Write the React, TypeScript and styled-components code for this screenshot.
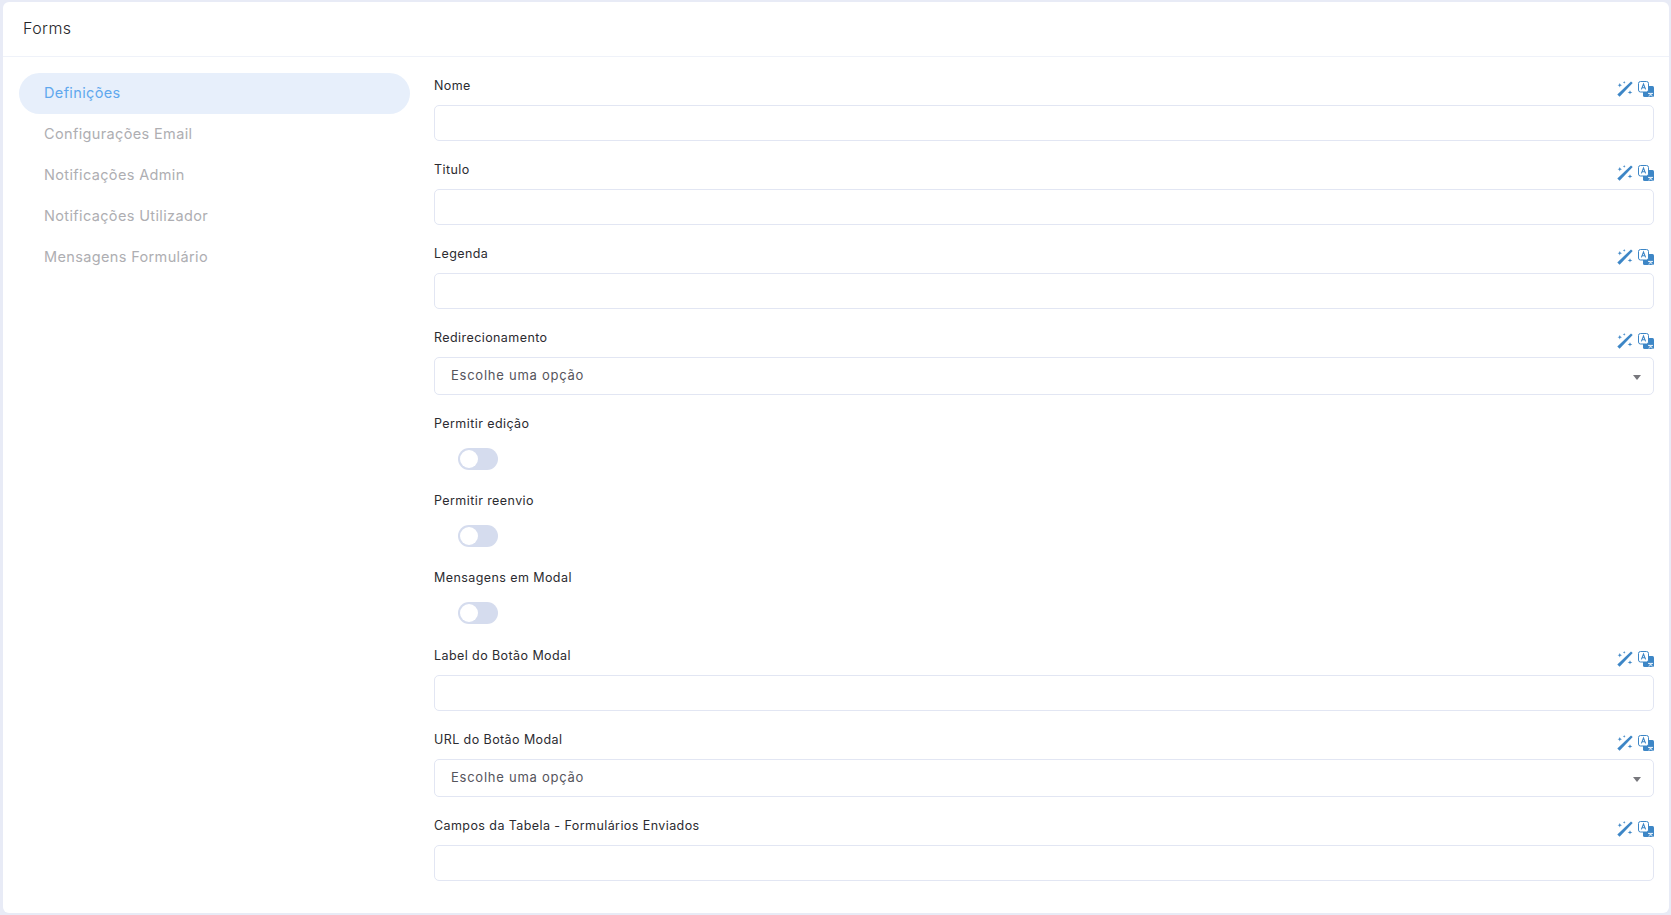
import React from 'react';
import styled, { createGlobalStyle } from 'styled-components';

const GlobalStyle = createGlobalStyle`
  html, body {
    margin: 0;
    padding: 0;
    height: 100%;
    background: #e8ebf6;
    font-family: Inter, "Noto Sans", sans-serif;
  }
  * { box-sizing: border-box; }
`;

const Page = styled.div`
  width: 1671px;
  height: 915px;
  padding: 2px 2px 2px 3px;
  overflow: hidden;
`;

const Card = styled.div`
  height: 911px;
  background: #fff;
  border-radius: 6px;
  display: flex;
  flex-direction: column;
`;

const CardHeader = styled.div`
  height: 55px;
  padding: 0 0 2px 20px;
  display: flex;
  align-items: center;
  border-bottom: 1px solid #eff2f9;
  font-size: 16px;
  font-weight: 300;
  color: #26262a;
  letter-spacing: 0.4px;
`;

const CardBody = styled.div`
  display: flex;
  flex: 1;
`;

const Sidebar = styled.nav`
  width: 431px;
  padding: 16px 24px 0 16px;
  flex-shrink: 0;
`;

const NavItem = styled.div<{ $active?: boolean }>`
  height: 41px;
  padding: 0 0 2px 25px;
  display: flex;
  align-items: center;
  border-radius: 21px;
  font-size: 14.5px;
  letter-spacing: 0.36px;
  color: ${({ $active }) => ($active ? '#5fa8ee' : '#aeaeb2')};
  background: ${({ $active }) => ($active ? '#e7effb' : 'transparent')};
`;

const Form = styled.div`
  flex: 1;
  padding: 16px 15px 0 0;
  min-width: 0;
`;

const Field = styled.div<{ $height: number }>`
  height: ${({ $height }) => $height}px;
`;

const LabelRow = styled.div`
  height: 32px;
  display: flex;
  align-items: flex-start;
  justify-content: space-between;
`;

const Label = styled.label`
  font-size: 12.5px;
  line-height: 25px;
  letter-spacing: 0.42px;
  color: #2b2b30;
`;

const Tools = styled.div`
  display: flex;
  gap: 5px;
  padding-top: 8px;
`;

const TextInput = styled.div`
  height: 36px;
  border: 1px solid #e2e6f3;
  border-radius: 5px;
  background: #fff;
`;

const SelectBox = styled.div`
  height: 38px;
  padding: 0 12px 3px 16px;
  border: 1px solid #e2e6f3;
  border-radius: 5px;
  display: flex;
  align-items: center;
  justify-content: space-between;
  font-size: 13px;
  letter-spacing: 0.75px;
  color: #55555c;
`;

const Caret = styled.span`
  width: 0;
  height: 0;
  margin-top: 5px;
  border-left: 4px solid transparent;
  border-right: 4px solid transparent;
  border-top: 5px solid #77777c;
`;

const SwitchTrack = styled.div`
  width: 40px;
  height: 22px;
  margin: 5px 0 0 24px;
  padding: 2px;
  border-radius: 11px;
  background: #d5dcee;
`;

const SwitchKnob = styled.div`
  width: 18px;
  height: 18px;
  border-radius: 50%;
  background: #fff;
`;

const WandIcon = () => (
  <svg width="16" height="16" viewBox="0 0 16 16" fill="#3d86c6">
    <path d="M14 0.4 15.7 2.1 2.6 15.7 0.3 13.4Z" />
    <path d="M2.8 2 3.4 3.6 5 4.2 3.4 4.8 2.8 6.4 2.2 4.8 0.6 4.2 2.2 3.6Z" />
    <path d="M7.2 0 7.6 1 8.6 1.4 7.6 1.8 7.2 2.8 6.8 1.8 5.8 1.4 6.8 1Z" />
    <path d="M13 9.2 13.6 10.8 15.4 11.4 13.6 12 13 13.6 12.4 12 10.6 11.4 12.4 10.8Z" />
  </svg>
);

const TranslateIcon = () => (
  <svg width="16" height="16" viewBox="0 0 16 16">
    <rect x="5" y="5" width="11" height="11" rx="1.5" fill="#3d86c6" />
    <rect x="0.5" y="0.5" width="10" height="10.5" rx="2" fill="#fff" stroke="#3d86c6" />
    <path d="M3.4 8.4 5.5 3 7.6 8.4M4.1 6.8H6.9" fill="none" stroke="#3d86c6" strokeWidth="1.1" />
    <path d="M10 12.4H15M13.8 12.4C13.2 13.6 12.2 14.6 10.6 15.2M11.4 12.4C12 13.6 13 14.6 14.6 15.2" fill="none" stroke="#fff" strokeWidth="0.9" />
  </svg>
);

const FieldLabel: React.FC<{ text: string; tools?: boolean }> = ({ text, tools = true }) => (
  <LabelRow>
    <Label>{text}</Label>
    {tools && (
      <Tools>
        <WandIcon />
        <TranslateIcon />
      </Tools>
    )}
  </LabelRow>
);

const navItems = [
  'Definições',
  'Configurações Email',
  'Notificações Admin',
  'Notificações Utilizador',
  'Mensagens Formulário',
];

const App: React.FC = () => {
  return (
    <Page>
      <GlobalStyle />
      <Card>
        <CardHeader>Forms</CardHeader>
        <CardBody>
          <Sidebar>
            {navItems.map((item, i) => (
              <NavItem key={item} $active={i === 0}>
                {item}
              </NavItem>
            ))}
          </Sidebar>
          <Form>
            <Field $height={84}>
              <FieldLabel text="Nome" />
              <TextInput />
            </Field>
            <Field $height={84}>
              <FieldLabel text="Titulo" />
              <TextInput />
            </Field>
            <Field $height={84}>
              <FieldLabel text="Legenda" />
              <TextInput />
            </Field>
            <Field $height={86}>
              <FieldLabel text="Redirecionamento" />
              <SelectBox>
                Escolhe uma opção
                <Caret />
              </SelectBox>
            </Field>
            <Field $height={77}>
              <FieldLabel text="Permitir edição" tools={false} />
              <SwitchTrack>
                <SwitchKnob />
              </SwitchTrack>
            </Field>
            <Field $height={77}>
              <FieldLabel text="Permitir reenvio" tools={false} />
              <SwitchTrack>
                <SwitchKnob />
              </SwitchTrack>
            </Field>
            <Field $height={78}>
              <FieldLabel text="Mensagens em Modal" tools={false} />
              <SwitchTrack>
                <SwitchKnob />
              </SwitchTrack>
            </Field>
            <Field $height={84}>
              <FieldLabel text="Label do Botão Modal" />
              <TextInput />
            </Field>
            <Field $height={86}>
              <FieldLabel text="URL do Botão Modal" />
              <SelectBox>
                Escolhe uma opção
                <Caret />
              </SelectBox>
            </Field>
            <Field $height={84}>
              <FieldLabel text="Campos da Tabela - Formulários Enviados" />
              <TextInput />
            </Field>
          </Form>
        </CardBody>
      </Card>
    </Page>
  );
};

export default App;
